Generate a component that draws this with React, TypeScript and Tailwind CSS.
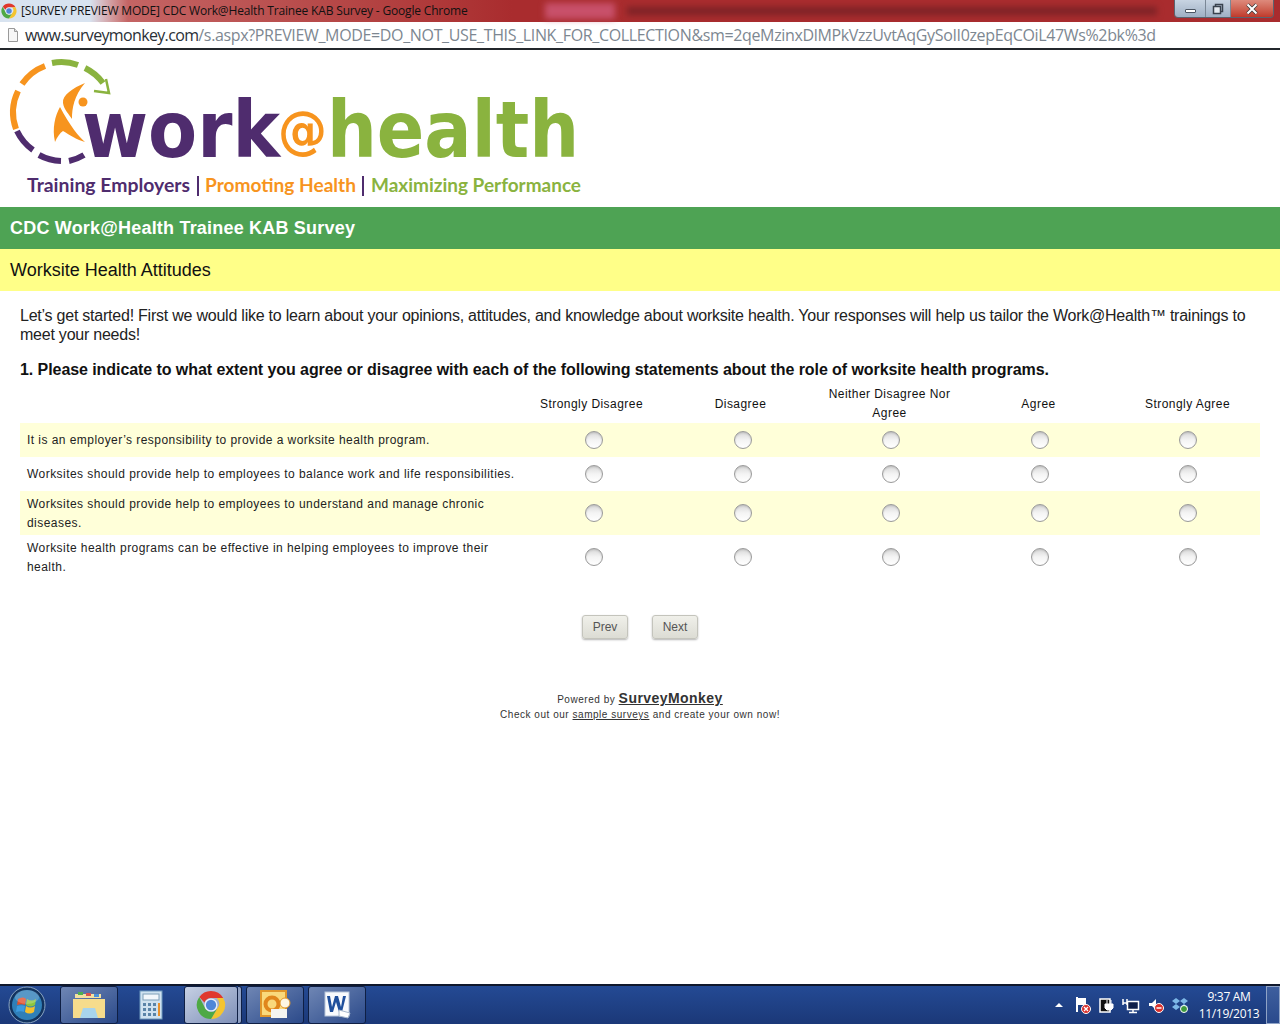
const columns = ['Strongly Disagree', 'Disagree', 'Neither Disagree Nor Agree', 'Agree', 'Strongly Agree'];

const statements = [
  { text: 'It is an employer’s responsibility to provide a worksite health program.', height: 'h-[34px]', bg: 'bg-[#ffffd9]' },
  { text: 'Worksites should provide help to employees to balance work and life responsibilities.', height: 'h-[34px]', bg: 'bg-white' },
  { text: 'Worksites should provide help to employees to understand and manage chronic diseases.', height: 'h-[44px]', bg: 'bg-[#ffffd9]' },
  { text: 'Worksite health programs can be effective in helping employees to improve their health.', height: 'h-[44px]', bg: 'bg-white' },
];

function ChromeIcon({ size }: { size: number }) {
  return (
    <svg width={size} height={size} viewBox="0 0 32 32">
      <path d="M16 1a15 15 0 0 1 13 7.500H16a7.500 7.500 0 0 0-7 4.800L3.500 7.500A15 15 0 0 1 16 1z" fill="#e0382e" />
      <path d="M29 8.500A15 15 0 0 1 16 31l6.500-11a7.500 7.500 0 0 0-.5-11.500z" fill="#f4c430" />
      <path d="M16 31A15 15 0 0 1 3.500 7.500L9.500 19a7.500 7.500 0 0 0 13 1L16 31z" fill="#4ea944" />
      <circle cx="16" cy="16" r="7" fill="#e8eef8" />
      <circle cx="16" cy="16" r="5.500" fill="#4f86d8" />
    </svg>
  );
}

function TitleBar() {
  return (
    <div className="relative flex h-[22px] items-center bg-gradient-to-r from-[#d8e3f0] from-[7%] via-[#c46464] via-[10%] to-[#a92c2e] to-[40%] pl-[1px]">
      <ChromeIcon size={16} />
      <span className="ml-[4px] whitespace-nowrap font-['Open_Sans',sans-serif] text-[12px] tracking-[-0.17px] text-[#111]">
        [SURVEY PREVIEW MODE] CDC Work@Health Trainee KAB Survey - Google Chrome
      </span>
      <div className="ml-[77px] h-[16px] w-[70px] bg-[#c8506a] blur-[3px]" />
      <div className="ml-[12px] h-[8px] w-[530px] bg-[#7c2226] blur-[3px]" />
      <div className="absolute right-[6px] top-0 flex h-[18px] w-[100px] overflow-hidden rounded-b-[4px] border border-t-0 border-[#5b6470]">
        <div className="flex w-[30px] items-center justify-center bg-gradient-to-b from-[#c8d4e2] to-[#9fb0c4]">
          <div className="mt-[5px] h-[4px] w-[11px] rounded-[1px] border border-[#4b5563] bg-white" />
        </div>
        <div className="flex w-[25px] items-center justify-center border-l border-[#7a8796] bg-gradient-to-b from-[#c8d4e2] to-[#9fb0c4]">
          <svg width="12" height="12" viewBox="0 0 12 12">
            <rect x="3.500" y="1.500" width="7" height="7" fill="none" stroke="#39424e" strokeWidth="1.500" />
            <rect x="1.500" y="3.500" width="7" height="7" fill="#e4eaf1" stroke="#39424e" strokeWidth="1.500" />
          </svg>
        </div>
        <div className="flex flex-1 items-center justify-center border-l border-[#7a8796] bg-gradient-to-b from-[#dd8a7c] to-[#c0392b]">
          <svg width="14" height="12" viewBox="0 0 14 12">
            <path d="M2.500 1.500l9 9M11.500 1.500l-9 9" stroke="#3b3b3b" strokeWidth="3.500" />
            <path d="M2.500 1.500l9 9M11.500 1.500l-9 9" stroke="#fff" strokeWidth="2" />
          </svg>
        </div>
      </div>
    </div>
  );
}

function AddressBar() {
  return (
    <div className="flex h-[28px] items-center border-b-2 border-[#23272c] bg-white pl-[7px] font-['Open_Sans',sans-serif] text-[16px]">
      <svg width="12" height="16" viewBox="0 0 12 16" className="mr-[6px]">
        <path d="M1.500 1.500h6l3 3v10h-9z" fill="#f6f6f6" stroke="#9a9a9a" />
        <path d="M7.500 1.500v3h3" fill="#ddd" stroke="#9a9a9a" />
      </svg>
      <span className="whitespace-nowrap tracking-[-0.65px] text-[#2a2f36]">www.surveymonkey.com</span>
      <span className="whitespace-nowrap tracking-[-0.35px] text-[#7d8791]">/s.aspx?PREVIEW_MODE=DO_NOT_USE_THIS_LINK_FOR_COLLECTION&amp;sm=2qeMzinxDlMPkVzzUvtAqGySoII0zepEqCOiL47Ws%2bk%3d</span>
    </div>
  );
}

function Logo() {
  return (
    <svg width="600" height="157" viewBox="0 0 600 157" className="block">
      <g fill="none" strokeWidth="6" strokeLinecap="butt" transform="translate(1 1)">
        <path d="M21 33 A49 49 0 0 1 44 15" stroke="#f7941e" />
        <path d="M51 12 A49 49 0 0 1 77 14" stroke="#8ab33f" />
        <path d="M84 17 A49 49 0 0 1 102 32" stroke="#8ab33f" />
        <path d="M17 40 A49 49 0 0 0 15 78" stroke="#f7941e" />
        <path d="M16 80 A49 49 0 0 0 32 99" stroke="#4f2c6e" />
        <path d="M38 104 A49 49 0 0 0 60 110" stroke="#4f2c6e" />
        <path d="M68 110 A49 49 0 0 0 83 104" stroke="#4f2c6e" />
      </g>
      <path d="M106 29 l3 14 -15 -2" fill="none" stroke="#8ab33f" strokeWidth="2.500" />
      <path d="M85 33 C73 38 62 45 63 53 C64 60 69 64 72 69 C72 58 74 46 85 33z" fill="#f7941e" />
      <path d="M60 57 C55 66 52 78 55 92 C57 87 60 83 63 81 C70 85 77 90 85 92 C79 87 70 76 60 57z" fill="#f7941e" />
      <circle cx="83" cy="52" r="4.500" fill="#f7941e" />
      <text x="82" y="107" fontFamily="'DejaVu Sans', sans-serif" fontWeight="700" fontSize="78" fill="#4f2c6e" textLength="198" lengthAdjust="spacingAndGlyphs">work</text>
      <text x="278" y="98" fontFamily="'DejaVu Sans', sans-serif" fontWeight="700" fontSize="52" fill="#f7941e" textLength="49" lengthAdjust="spacingAndGlyphs">@</text>
      <text x="327" y="107" fontFamily="'DejaVu Sans', sans-serif" fontWeight="700" fontSize="78" fill="#8ab33f" textLength="252" lengthAdjust="spacingAndGlyphs">health</text>
      <g fontFamily="'Lato', sans-serif" fontWeight="700" fontSize="18">
        <text x="27" y="142" fill="#4f2c6e" textLength="163" lengthAdjust="spacingAndGlyphs">Training Employers</text>
        <text x="205" y="142" fill="#f7941e" textLength="151" lengthAdjust="spacingAndGlyphs">Promoting Health</text>
        <text x="371" y="142" fill="#8ab33f" textLength="210" lengthAdjust="spacingAndGlyphs">Maximizing Performance</text>
      </g>
      <rect x="197" y="126" width="2" height="20" fill="#4f2c6e" />
      <rect x="362" y="126" width="2" height="20" fill="#4f2c6e" />
    </svg>
  );
}

function Radio() {
  return <span className="block h-[18px] w-[18px] rounded-full border border-[#9a9a9a] bg-gradient-to-b from-[#d8d8d8] via-[#f4f4f4] to-white shadow-[inset_0_1px_2px_rgba(0,0,0,0.15)]" />;
}

function SurveyTable() {
  return (
    <div className="ml-[20px] mt-[6px] w-[1240px] text-[12px] leading-[19px] tracking-[0.45px] text-[#222]">
      <div className="grid h-[38px] grid-cols-[497px_repeat(5,149px)] items-center text-center">
        <div />
        {columns.map((c) => (
          <div key={c} className="px-[10px] text-[#111]">{c}</div>
        ))}
      </div>
      {statements.map((s) => (
        <div key={s.text} className={`grid grid-cols-[503px_repeat(5,148.500px)] items-center ${s.height} ${s.bg}`}>
          <div className="pl-[7px] pr-[5px] pt-[1px]">{s.text}</div>
          {columns.map((c) => (
            <div key={c} className="flex justify-center pr-[6px]">
              <Radio />
            </div>
          ))}
        </div>
      ))}
    </div>
  );
}

function NavButton({ label }: { label: string }) {
  return (
    <button className="h-[24px] w-[46px] rounded-[3px] border border-[#c4c4bc] bg-gradient-to-b from-[#f0f0ea] to-[#dcdcd4] text-[12px] text-[#555] shadow-[0_1px_2px_rgba(0,0,0,0.3)]">
      {label}
    </button>
  );
}

function TaskButton({ children, active, className }: { children: React.ReactNode; active?: boolean; className: string }) {
  return (
    <div className={`flex h-[38px] items-center justify-center rounded-[3px] border border-[#0f1f44] ${active ? 'bg-gradient-to-br from-[#c6d0e4] to-[#7f90b8]' : 'bg-gradient-to-br from-[#6f86b4] to-[#2c4a8a]'} ${className}`}>
      {children}
    </div>
  );
}

function Taskbar() {
  return (
    <div className="flex h-[40px] items-center border-t-2 border-[#10182c] bg-gradient-to-b from-[#244a94] to-[#1b3878] pl-[8px] text-white">
      <svg width="38" height="38" viewBox="0 0 38 38">
        <circle cx="19" cy="19" r="18" fill="#12335f" stroke="#8aa4c2" />
        <circle cx="19" cy="19" r="15" fill="#2f7fb8" />
        <path d="M10 13c3-2 6-2 8 0l-1 6c-2-1-5-1-8 0z" fill="#e0502c" />
        <path d="M19 13c3 2 6 2 9 0l-1 6c-3 2-6 2-9 0z" fill="#8cc63f" />
        <path d="M9 20c3-1 6-1 8 0l-1 6c-2-1-5-1-8 0z" fill="#3b9be0" />
        <path d="M18 20c3 2 6 2 9 0l-1 6c-3 2-6 2-9 0z" fill="#f5c02c" />
        <ellipse cx="19" cy="11" rx="12" ry="7" fill="#fff" opacity="0.2" />
      </svg>
      <TaskButton className="ml-[14px] w-[58px]">
        <svg width="34" height="30" viewBox="0 0 34 30">
          <path d="M3 4h26v4H3z" fill="#f3e0a0" />
          <rect x="6" y="2" width="5" height="3" fill="#4caf50" />
          <rect x="14" y="3" width="5" height="3" fill="#d9534f" />
          <rect x="22" y="4" width="5" height="3" fill="#4a90d9" />
          <path d="M1 9h32v19H1z" fill="#f6dc8c" />
          <path d="M11 18h12l3 10H8z" fill="#a8d4ec" />
        </svg>
      </TaskButton>
      <div className="ml-[4px] flex h-[38px] w-[58px] items-center justify-center">
        <svg width="24" height="30" viewBox="0 0 24 30">
          <rect x="1" y="1" width="22" height="28" fill="#cfe2f0" stroke="#6f99bd" />
          <rect x="4" y="4" width="16" height="6" fill="#f2f7fb" stroke="#7f9fb8" />
          <g fill="#5a84a8">
            <rect x="4" y="13" width="3" height="3" /><rect x="9" y="13" width="3" height="3" /><rect x="14" y="13" width="3" height="3" />
            <rect x="4" y="18" width="3" height="3" /><rect x="9" y="18" width="3" height="3" /><rect x="14" y="18" width="3" height="3" />
            <rect x="4" y="23" width="3" height="3" /><rect x="9" y="23" width="3" height="3" /><rect x="14" y="23" width="3" height="3" />
          </g>
          <rect x="19" y="13" width="2" height="13" fill="#e8912c" />
        </svg>
      </div>
      <TaskButton active className="ml-[4px] w-[54px]">
        <ChromeIcon size={30} />
      </TaskButton>
      <div className="h-[38px] w-[4px] rounded-r-[3px] border border-l-0 border-[#0f1f44] bg-[#8fa0c4]" />
      <TaskButton className="ml-[4px] w-[58px]">
        <svg width="32" height="30" viewBox="0 0 32 30">
          <rect x="2" y="1" width="25" height="25" fill="#f9d97c" stroke="#e0962a" strokeWidth="2" />
          <circle cx="13" cy="14" r="6.500" fill="none" stroke="#e0861c" strokeWidth="4" />
          <path d="M12 19l16 0 0 9-16 0z" fill="#f4f4f0" />
          <circle cx="26" cy="13" r="5" fill="#fdf6e3" stroke="#e0962a" />
        </svg>
      </TaskButton>
      <TaskButton className="ml-[4px] w-[58px]">
        <svg width="30" height="30" viewBox="0 0 30 30">
          <rect x="3" y="2" width="24" height="24" fill="#f8fafd" stroke="#b8c6da" />
          <path d="M5 6h3l2 11 3-11h3l3 11 2-11h3l-4 16h-3l-3-10-3 10h-3z" fill="#1f4f9c" />
          <path d="M17 20l11 3-2 5-9-2z" fill="#fff" stroke="#a8b8cc" />
        </svg>
      </TaskButton>
      <div className="ml-auto flex items-center">
        <div className="mr-[12px] h-0 w-0 border-x-[4px] border-b-[4px] border-x-transparent border-b-white" />
        <div className="flex w-[120px] items-center gap-[8px]">
          <svg width="16" height="18" viewBox="0 0 16 18">
            <path d="M2 1v15" stroke="#fff" strokeWidth="2" />
            <path d="M3 2h8v7H3z" fill="#fff" />
            <circle cx="11" cy="13" r="4.500" fill="#d9302c" stroke="#fff" />
            <path d="M9 11l4 4M13 11l-4 4" stroke="#fff" strokeWidth="1.300" />
          </svg>
          <svg width="15" height="18" viewBox="0 0 15 18">
            <rect x="1" y="3" width="10" height="13" fill="#111" stroke="#fff" strokeWidth="1.500" />
            <path d="M6 8h8v4l-2 2h-4l-2-2zM8 4v4M12 4v4" fill="#fff" stroke="#fff" />
          </svg>
          <svg width="18" height="18" viewBox="0 0 18 18">
            <path d="M1 3v6M5 3v6M1 7h4" stroke="#fff" strokeWidth="1.500" />
            <rect x="5.500" y="5.500" width="11" height="8" fill="#10204a" stroke="#fff" strokeWidth="1.500" />
            <path d="M11 14v2M7 16.500h8" stroke="#fff" strokeWidth="1.500" />
          </svg>
          <svg width="16" height="18" viewBox="0 0 16 18">
            <path d="M1 7h3l4-4v11l-4-4H1z" fill="#fff" />
            <circle cx="11" cy="12" r="4.500" fill="#d9302c" stroke="#fff" />
            <path d="M8.500 12h5" stroke="#fff" strokeWidth="1.500" />
          </svg>
          <svg width="16" height="18" viewBox="0 0 16 18">
            <path d="M4 2l4 3-4 3-4-3zM12 2l4 3-4 3-4-3zM4 8l4 3-4 3-4-3zM12 8l4 3-4 3-4-3z" fill="#7db8e8" />
            <circle cx="12" cy="13" r="3.500" fill="#3d9a3d" stroke="#fff" />
          </svg>
        </div>
        <div className="w-[68px] text-center font-['Open_Sans',sans-serif] text-[12px] leading-[17px] tracking-[-0.3px]">
          <div>9:37 AM</div>
          <div>11/19/2013</div>
        </div>
        <div className="ml-[3px] h-[38px] w-[14px] border border-[#8fa3c6] bg-gradient-to-b from-[#3e5f9e] to-[#2a4a8c]" />
      </div>
    </div>
  );
}

export default function App() {
  return (
    <div className="flex h-[1024px] w-[1280px] flex-col overflow-hidden bg-white font-['Liberation_Sans',Arial,sans-serif]">
      <TitleBar />
      <AddressBar />
      <Logo />
      <h1 className="flex h-[42px] items-center bg-[#4ea354] pl-[10px] text-[18px] font-bold tracking-[0.2px] text-white">CDC Work@Health Trainee KAB Survey</h1>
      <h2 className="flex h-[42px] items-center bg-[#ffff88] pl-[10px] text-[18px] text-[#111]">Worksite Health Attitudes</h2>
      <main className="flex-1">
        <p className="ml-[20px] mt-[15px] w-[1240px] text-[16px] leading-[19px] tracking-[-0.23px] text-[#222]">
          Let’s get started! First we would like to learn about your opinions, attitudes, and knowledge about worksite health. Your responses will help us tailor the Work@Health™ trainings to meet your needs!
        </p>
        <p className="ml-[20px] mt-[16px] text-[16px] font-bold leading-[19px] tracking-[-0.07px] text-[#111]">
          1. Please indicate to what extent you agree or disagree with each of the following statements about the role of worksite health programs.
        </p>
        <SurveyTable />
        <div className="mt-[36px] flex justify-center gap-[24px]">
          <NavButton label="Prev" />
          <NavButton label="Next" />
        </div>
        <footer className="mt-[52px] text-center text-[10px] leading-[15px] tracking-[0.53px] text-[#333]">
          <div>
            Powered by <a className="text-[14px] font-bold tracking-[0.45px] underline">SurveyMonkey</a>
          </div>
          <div>
            Check out our <a className="underline">sample surveys</a> and create your own now!
          </div>
        </footer>
      </main>
      <Taskbar />
    </div>
  );
}
